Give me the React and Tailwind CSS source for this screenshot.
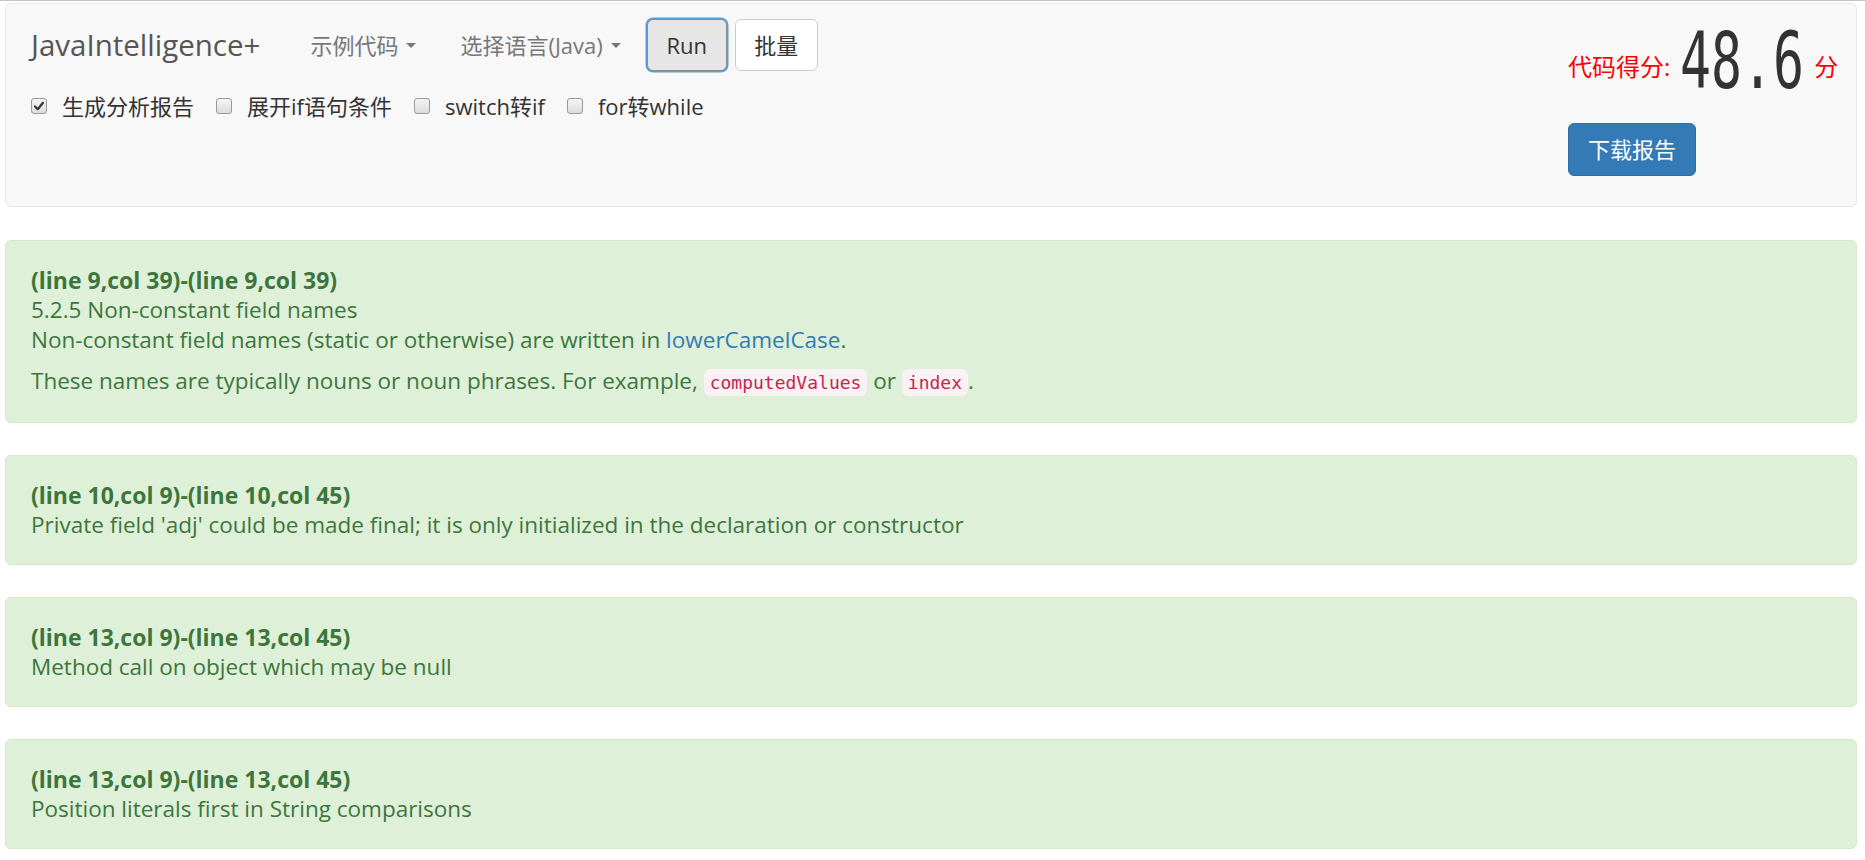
import React from "react";

const FONT = "font-['Open_Sans','Noto_Sans_CJK_SC',sans-serif]";

function Caret() {
  return (
    <span className="ml-[8px] inline-block h-0 w-0 border-x-[5px] border-t-[5px] border-x-transparent border-t-[#777]" />
  );
}

function Check({ checked }) {
  return (
    <span className="flex h-[16px] w-[16px] items-center justify-center rounded-[3px] border border-[#9a9a9a] bg-gradient-to-b from-[#f4f4f4] to-[#dcdcdc]">
      {checked && (
        <svg width="12" height="12" viewBox="0 0 12 12">
          <path d="M2 6.5 L4.8 9.2 L10 2.8" fill="none" stroke="#333" strokeWidth="2.2" strokeLinecap="round" strokeLinejoin="round" />
        </svg>
      )}
    </span>
  );
}

function Code({ children }) {
  return (
    <code className="rounded-[6px] bg-[#f9f2f4] px-[6px] py-[3px] font-['DejaVu_Sans_Mono',monospace] text-[18px] text-[#c7254e]">
      {children}
    </code>
  );
}

function Alert({ title, children, last }) {
  return (
    <div className={`rounded-[6px] border border-[#d6e9c6] bg-[#dff0d8] px-[25px] py-[24px] text-[22.5px] leading-[30px] text-[#3c763d] ${last ? "" : "mb-[32px]"}`}>
      <div className="text-[23px] font-bold">{title}</div>
      {children}
    </div>
  );
}

export default function App() {
  return (
    <div className={`min-h-screen border-t border-[#c4c4c4] bg-white pl-[5px] pr-[8px] pt-[2px] ${FONT}`}>
      {/* Navbar */}
      <div className="mb-[33px] flex h-[204px] justify-between rounded-[6px] border border-[#e7e7e7] bg-[#f8f8f8]">
        <div className="pl-[25px] pt-[14px]">
          <div className="flex h-[54px] items-center">
            <span className="text-[29.5px] leading-[54px] text-[#555]">JavaIntelligence+</span>
            <span className="ml-[50px] flex items-center text-[22px] text-[#777]">
              示例代码
              <Caret />
            </span>
            <span className="ml-[44px] flex items-center text-[22px] text-[#777]">
              选择语言(Java)
              <Caret />
            </span>
            <button className="ml-[26px] h-[52px] w-[80px] rounded-[6px] border border-[#8c8c8c] bg-[#e6e6e6] text-[22px] text-[#333] shadow-[0_0_0_1.5px_#5b9dd9]">
              Run
            </button>
            <button className="ml-[8px] h-[52px] w-[83px] rounded-[6px] border border-[#ccc] bg-white text-[22px] text-[#333]">
              批量
            </button>
          </div>
          <div className="mt-[19px] flex h-[30px] items-center text-[22px] text-[#333]">
            <Check checked />
            <span className="ml-[15px]">生成分析报告</span>
            <span className="ml-[22px]"><Check /></span>
            <span className="ml-[15px]">展开if语句条件</span>
            <span className="ml-[22px]"><Check /></span>
            <span className="ml-[15px]">switch转if</span>
            <span className="ml-[22px]"><Check /></span>
            <span className="ml-[15px]">for转while</span>
          </div>
        </div>
        <div className="w-[288px] pt-[28px]">
          <div className="flex h-[57px] items-start">
            <span className="mt-[20px] text-[24px] leading-[30px] text-[#ff0000]">代码得分:</span>
            <span className="ml-[10px] w-[124px] overflow-visible">
              <span className="mt-[1px] inline-block origin-left scale-x-[0.66] whitespace-nowrap font-['DejaVu_Sans_Mono',monospace] text-[78px] leading-[57px] text-[#333]">
                48.6
              </span>
            </span>
            <span className="ml-[10px] mt-[20px] text-[24px] leading-[30px] text-[#ff0000]">分</span>
          </div>
          <button className="mt-[34px] h-[53px] w-[128px] rounded-[6px] border border-[#2e6da4] bg-[#337ab7] text-[22px] text-white">
            下载报告
          </button>
        </div>
      </div>

      {/* Alerts */}
      <Alert title="(line 9,col 39)-(line 9,col 39)">
        <div>5.2.5 Non-constant field names</div>
        <div>
          Non-constant field names (static or otherwise) are written in{" "}
          <span className="text-[#337ab7]">lowerCamelCase</span>.
        </div>
        <div className="mt-[11px]">
          These names are typically nouns or noun phrases. For example, <Code>computedValues</Code> or{" "}
          <Code>index</Code>.
        </div>
      </Alert>
      <Alert title="(line 10,col 9)-(line 10,col 45)">
        <div>Private field 'adj' could be made final; it is only initialized in the declaration or constructor</div>
      </Alert>
      <Alert title="(line 13,col 9)-(line 13,col 45)">
        <div>Method call on object which may be null</div>
      </Alert>
      <Alert title="(line 13,col 9)-(line 13,col 45)" last>
        <div>Position literals first in String comparisons</div>
      </Alert>
    </div>
  );
}
